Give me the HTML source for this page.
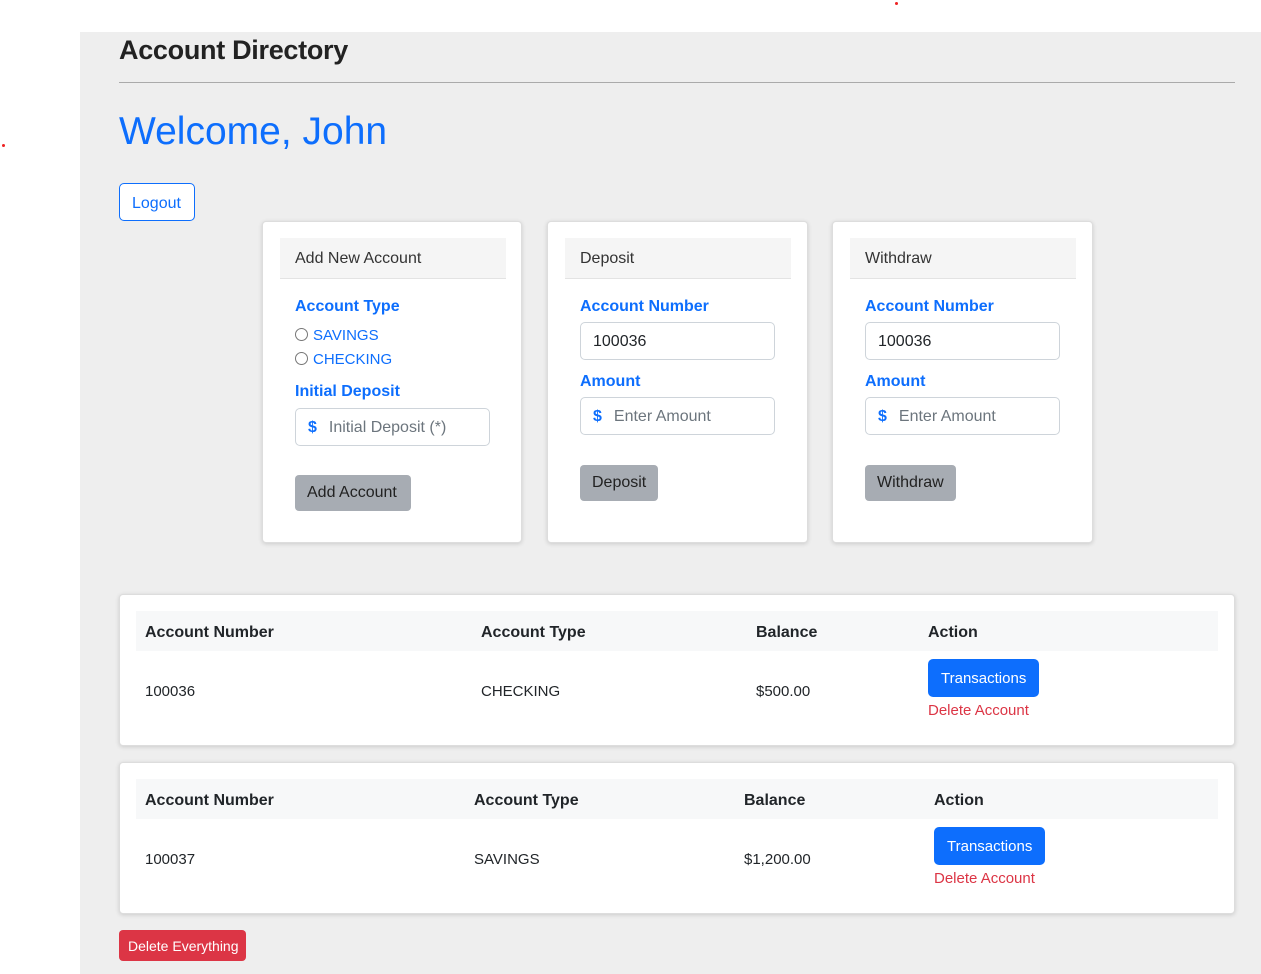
<!DOCTYPE html><html><head><style>
*{box-sizing:border-box;margin:0;padding:0}
body{width:1261px;height:974px;background:#fff;font-family:"Liberation Sans",sans-serif;position:relative;overflow:hidden;color:#212529}
.a{position:absolute;white-space:nowrap}
.bg{left:80px;top:32px;width:1181px;height:942px;background:#eee}
.card{background:#fff;border:1px solid #ddd;border-radius:4px;box-shadow:0 1px 4px rgba(0,0,0,.15)}
.ch{background:#f5f5f5;border-bottom:1px solid #e3e3e3;height:41px;font-size:16px;color:#333;padding:12px 15px}
.lbl{color:#0d6efd;font-weight:bold;font-size:16px}
.inp{border:1px solid #ced4da;border-radius:5px;background:#fff;height:38px;width:195px;font-size:16px;padding:10px 12px}
.ph{color:#6c757d}
.dollar{color:#0d6efd;font-weight:bold;margin-right:12px}
.gb{background:#a7acb3;border-radius:4px;font-size:16px;color:#222;padding:9px 12px;height:36px}
.th{font-weight:bold;font-size:16px}
.td{font-size:15px}
.tb{background:#0d6efd;color:#fff;border-radius:5px;font-size:15px;padding:11px 13px;height:38px}
.del{color:#dc3545;font-size:15px}
.radio{display:inline-block;width:13px;height:13px;border:1px solid #777;border-radius:50%;margin-right:5px;vertical-align:-1px}
</style></head><body>
<div class="a bg"></div>
<div class="a" style="left:895px;top:2px;width:3px;height:3px;background:#e22;border-radius:50%"></div>
<div class="a" style="left:2px;top:144px;width:3px;height:3px;background:#e22;border-radius:50%"></div>
<div class="a" style="left:119px;top:35px;font-size:27px;color:#222;font-weight:bold;letter-spacing:-0.3px">Account Directory</div>
<div class="a" style="left:119px;top:82px;width:1116px;height:1px;background:#aaa"></div>
<div class="a" style="left:119px;top:110px;font-size:39px;color:#0d6efd">Welcome, John</div>
<div class="a" style="left:119px;top:183px;width:76px;height:38px;border:1px solid #0d6efd;border-radius:5px;color:#0d6efd;font-size:16px;padding:11px 12px;background:#fff">Logout</div>

<div class="a card" style="left:262px;top:221px;width:260px;height:322px">
 <div class="a ch" style="left:17px;top:16px;width:226px">Add New Account</div>
 <div class="a lbl" style="left:32px;top:76px">Account Type</div>
 <div class="a" style="left:32px;top:105px;color:#0d6efd;font-size:15px"><span class="radio"></span>SAVINGS</div>
 <div class="a" style="left:32px;top:129px;color:#0d6efd;font-size:15px"><span class="radio"></span>CHECKING</div>
 <div class="a lbl" style="left:32px;top:161px">Initial Deposit</div>
 <div class="a inp" style="left:32px;top:186px;width:195px"><span class="dollar">$</span><span class="ph">Initial Deposit (*)</span></div>
 <div class="a gb" style="left:32px;top:253px;width:116px">Add Account</div>
</div>

<div class="a card" style="left:547px;top:221px;width:261px;height:322px">
 <div class="a ch" style="left:17px;top:16px;width:226px">Deposit</div>
 <div class="a lbl" style="left:32px;top:76px">Account Number</div>
 <div class="a inp" style="left:32px;top:100px">100036</div>
 <div class="a lbl" style="left:32px;top:151px">Amount</div>
 <div class="a inp" style="left:32px;top:175px"><span class="dollar">$</span><span class="ph">Enter Amount</span></div>
 <div class="a gb" style="left:32px;top:243px">Deposit</div>
</div>

<div class="a card" style="left:832px;top:221px;width:261px;height:322px">
 <div class="a ch" style="left:17px;top:16px;width:226px">Withdraw</div>
 <div class="a lbl" style="left:32px;top:76px">Account Number</div>
 <div class="a inp" style="left:32px;top:100px">100036</div>
 <div class="a lbl" style="left:32px;top:151px">Amount</div>
 <div class="a inp" style="left:32px;top:175px"><span class="dollar">$</span><span class="ph">Enter Amount</span></div>
 <div class="a gb" style="left:32px;top:243px">Withdraw</div>
</div>

<div class="a card" style="left:119px;top:594px;width:1116px;height:152px">
 <div class="a" style="left:16px;top:16px;width:1082px;height:40px;background:#f7f8f9"></div>
 <div class="a th" style="left:25px;top:29px">Account Number</div>
 <div class="a th" style="left:361px;top:29px">Account Type</div>
 <div class="a th" style="left:636px;top:29px">Balance</div>
 <div class="a th" style="left:808px;top:29px">Action</div>
 <div class="a td" style="left:25px;top:88px">100036</div>
 <div class="a td" style="left:361px;top:88px">CHECKING</div>
 <div class="a td" style="left:636px;top:88px">$500.00</div>
 <div class="a tb" style="left:808px;top:64px">Transactions</div>
 <div class="a del" style="left:808px;top:107px">Delete Account</div>
</div>

<div class="a card" style="left:119px;top:762px;width:1116px;height:152px">
 <div class="a" style="left:16px;top:16px;width:1082px;height:40px;background:#f7f8f9"></div>
 <div class="a th" style="left:25px;top:29px">Account Number</div>
 <div class="a th" style="left:354px;top:29px">Account Type</div>
 <div class="a th" style="left:624px;top:29px">Balance</div>
 <div class="a th" style="left:814px;top:29px">Action</div>
 <div class="a td" style="left:25px;top:88px">100037</div>
 <div class="a td" style="left:354px;top:88px">SAVINGS</div>
 <div class="a td" style="left:624px;top:88px">$1,200.00</div>
 <div class="a tb" style="left:814px;top:64px">Transactions</div>
 <div class="a del" style="left:814px;top:107px">Delete Account</div>
</div>

<div class="a" style="left:119px;top:930px;width:127px;height:31px;background:#dc3545;border-radius:4px;color:#fff;font-size:14px;padding:8px 9px">Delete Everything</div>
</body></html>
